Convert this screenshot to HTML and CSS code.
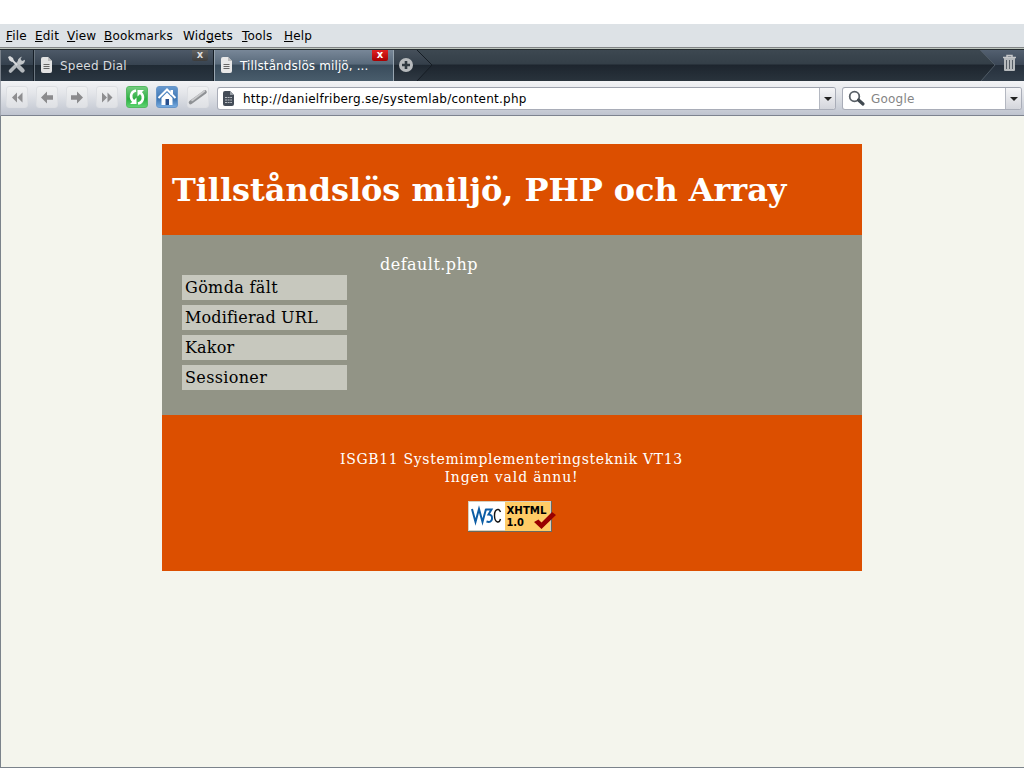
FILE: index.html
```html
<!DOCTYPE html>
<html lang="sv">
<head>
<meta charset="utf-8">
<title>Tillståndslös miljö, PHP och Array</title>
<link rel="stylesheet" href="styles.css">
</head>
<body>
<nav class="menubar">
  <span class="m-file"><u>F</u>ile</span><span class="m-edit"><u>E</u>dit</span><span class="m-view"><u>V</u>iew</span><span class="m-book"><u>B</u>ookmarks</span><span class="m-widg">Wid<u>g</u>ets</span><span class="m-tool"><u>T</u>ools</span><span class="m-help"><u>H</u>elp</span>
</nav>
<div class="tabbar">
  <div class="panel-toggle">
    <svg width="20" height="20" viewBox="0 0 20 20"><path d="M3.500 16L12 7.500" stroke="#b4b9bd" stroke-width="3.600" stroke-linecap="round"/><path d="M11 8.500Q9.500 3.500 15 1.500L13.500 4l1.500 2 3-1.200Q18 9.500 12.500 10z" fill="#c3c7ca"/><path d="M3 3l8 8" stroke="#d8dadc" stroke-width="1.800"/><path d="M1 2l2-1 3 2 .8 2.500L5 7 2.500 5.500z" fill="#d8dadc"/><path d="M11.500 11.500l4 4" stroke="#b4b9bd" stroke-width="4.400" stroke-linecap="round"/></svg>
  </div>
  <div class="tab">
    <svg class="doc" width="12" height="17" viewBox="0 0 12 17"><path d="M0 2q0-2 2-2h5l4 4v10q0 2-2 2H2q-2 0-2-2z" fill="#e2e2e2"/><path d="M7 0v4h4z" fill="#bbb"/><path d="M2.500 7.500h6M2.500 9.500h6M2.500 11.500h6" stroke="#666"/></svg>
    <span class="tab-name">Speed Dial</span><b class="close">x</b>
  </div>
  <div class="tab active">
    <svg class="doc" width="12" height="17" viewBox="0 0 12 17"><path d="M0 2q0-2 2-2h5l4 4v10q0 2-2 2H2q-2 0-2-2z" fill="#e8e8e8"/><path d="M7 0v4h4z" fill="#bbb"/><path d="M2.500 7.500h6M2.500 9.500h6M2.500 11.500h6" stroke="#666"/></svg>
    <span class="tab-name">Tillståndslös miljö, ...</span><b class="close">x</b>
  </div>
  <svg class="new-tab" width="42" height="31" viewBox="0 0 42 31"><defs><linearGradient id="g" x2="0" y2="1"><stop stop-color="#46505b"/><stop offset=".46" stop-color="#343f4a"/><stop offset=".5" stop-color="#1f2831"/><stop offset="1" stop-color="#303a44"/></linearGradient></defs><path d="M0 0h23l15 15-15 16H0z" fill="url(#g)"/><path d="M23 0l15 15-15 16" fill="none" stroke="#161d24"/><circle cx="12" cy="15" r="7" fill="#b7babd"/><path d="M8 15h8M12 11v8" stroke="#303941" stroke-width="2.600"/></svg>
  <svg class="trash" width="44" height="31" viewBox="0 0 44 31"><defs><linearGradient id="t" x2="0" y2="1"><stop stop-color="#536070"/><stop offset=".47" stop-color="#3c4857"/><stop offset=".5" stop-color="#26303c"/><stop offset="1" stop-color="#323e4a"/></linearGradient></defs><path d="M0 0h44v31H1l14-16z" fill="url(#t)"/><path d="M0 0l15 15L1 31" fill="none" stroke="#4f5a65"/><path d="M23 7.500h13M27 7V5.500h5V7" stroke="#c6c8ca" stroke-width="1.500" fill="none"/><path d="M24 8h11v12q0 1-1 1h-9q-1 0-1-1z" fill="#b6babd"/><path d="M26.500 10v9M29.500 10v9M32.500 10v9" stroke="#555d65"/></svg>
</div>
<div class="toolbar">
  <div class="buttons">
    <i class="btn"><svg width="22" height="22" viewBox="0 0 22 22"><path d="M11 6.500v10l-5-5zM16.500 6.500v10l-5-5z" fill="#8e8e90"/></svg></i>
    <i class="btn"><svg width="22" height="22" viewBox="0 0 22 22"><path d="M5 11.500l6-6v3.700h6v4.600h-6v3.700z" fill="#8b8b8d"/></svg></i>
    <i class="btn"><svg width="22" height="22" viewBox="0 0 22 22"><path d="M17 11.500l-6-6v3.700H5v4.600h6v3.700z" fill="#8b8b8d"/></svg></i>
    <i class="btn"><svg width="22" height="22" viewBox="0 0 22 22"><path d="M6 6.500v10l5-5zM11.500 6.500v10l5-5z" fill="#8e8e90"/></svg></i>
    <i class="btn green"><svg width="22" height="22" viewBox="0 0 22 22"><path d="M10 4.500C4.500 5.500 3.500 12 7.500 15.500M12 17.500c5.500-1 6.500-7.500 2.500-11" fill="none" stroke="#fff" stroke-width="2.600"/><path d="M4 18h6.500v-6.500zM18 4h-6.500v6.500z" fill="#fff"/></svg></i>
    <i class="btn blue"><svg width="22" height="22" viewBox="0 0 22 22"><path d="M14.500 4h2.500v5h-2.500zM5.500 12L11 6.500l5.500 5.500v7h-11z" fill="#fff"/><path d="M2.500 12L11 3.500l8.500 8.500" fill="none" stroke="#fff" stroke-width="2"/><path d="M5.500 11.500L11 6l5.500 5.500" fill="none" stroke="#5c8fc8" stroke-width=".8"/><path d="M9.500 13h3.500v6H9.500z" fill="#284f8c"/></svg></i>
    <i class="btn wand"><svg width="22" height="22" viewBox="0 0 22 22"><path d="M3.500 16.500L18 6" stroke="#8e9194" stroke-width="3.600" stroke-linecap="round"/><path d="M5 14.500L17.500 5" stroke="#cacbcd" stroke-width="1.600" stroke-linecap="round"/></svg></i>
  </div>
  <div class="field address">
    <svg width="12" height="16" viewBox="0 0 12 16"><path d="M0 2q0-2 2-2h5l4 4v9q0 2-2 2H2q-2 0-2-2z" fill="#454d58"/><path d="M7 0v4h4z" fill="#969ca3"/><path d="M2 6.500h7M2 9h7M2 11.500h7" stroke="#b8bcc2" stroke-dasharray="2 .6"/></svg>
    <span class="url">http://danielfriberg.se/systemlab/content.php</span><i class="drop"></i>
  </div>
  <div class="field search">
    <svg width="18" height="17" viewBox="0 0 18 17"><circle cx="6.500" cy="6.500" r="4.800" fill="#fff" stroke="#596067" stroke-width="1.800"/><path d="M10.500 10l4.500 4" stroke="#414950" stroke-width="3.200" stroke-linecap="round"/></svg>
    <span class="engine">Google</span><i class="drop"></i>
  </div>
</div>
<div class="viewport">
  <main class="page">
    <header class="banner"><h1>Tillståndslös miljö, PHP och Array</h1></header>
    <section class="content">
      <ul class="links"><li class="l1">Gömda fält</li><li class="l2">Modifierad URL</li><li class="l3">Kakor</li><li class="l4">Sessioner</li></ul>
      <p class="default">default.php</p>
    </section>
    <footer class="footer">
      <p><span class="course">ISGB11 Systemimplementeringsteknik VT13</span><br><span class="none">Ingen vald ännu!</span></p>
      <svg class="badge" width="90" height="32" viewBox="0 0 90 32"><path d="M0 0h84v31H0z" fill="#69695f"/><path d="M0 0h83v30H0z" fill="#d5d0c0"/><path d="M1 1h36v28H1z" fill="#fff"/><path d="M37 1h45v29H37z" fill="#fc6"/><g fill="none" stroke="#0c5da5" stroke-width="2"><path d="M4 8l3.500 13L11 8l3.500 13L18 8"/><path d="M17.500 8.500h6l-3 5q4 0 3.500 4.500-.8 4-5.500 2.500"/></g><path d="M32.500 11q-1-3-3-2.500-3 .5-3 6t3 6.500q2 .5 3-3" fill="none" stroke="#111" stroke-width="1.400"/><text x="38.500" y="13" textLength="40" lengthAdjust="spacingAndGlyphs">XHTML</text><text x="38.500" y="24.500" textLength="17.500" lengthAdjust="spacingAndGlyphs">1.0</text><path d="M66 21l4.500-2.500 3 3L84 11l4 3-14.500 14z" fill="#900"/></svg>
    </footer>
  </main>
</div>
</body>
</html>
```
FILE: styles.css
```css
* { box-sizing: border-box; }
body { margin: 0; padding-top: 24px; width: 1024px; height: 768px; overflow: hidden; background: #fff; font: 12px "DejaVu Sans", sans-serif; display: flex; flex-direction: column; }
.menubar { height: 23px; flex: none; background: #dde2e6; padding-left: 6px; display: flex; line-height: 25px; color: #000; letter-spacing: .2px; }
.menubar span { flex: none; white-space: nowrap; }
.menubar u { text-underline-offset: 1px; text-decoration-thickness: 1px; text-decoration-skip-ink: none; }
.m-file { width: 29px; }
.m-edit { width: 32px; }
.m-view { width: 37px; }
.m-book { width: 79px; }
.m-widg { width: 59px; }
.m-tool { width: 42px; }
.tabbar { height: 34px; flex: none; display: flex; border-top: 1px solid #818486; box-shadow: inset 0 1px #bdc5bd, inset 0 2px #252c31; padding-top: 2px; background: linear-gradient(#3e4952 0, #343f48 16px, #1d252e 17px, #29333c 100%); }
.panel-toggle { width: 34px; padding: 5px 0 0 6px; border-left: 1px solid #788089; border-right: 1px solid #161e27; background: linear-gradient(#485461, #36424f 47%, #232d37 48%, #303c48); }
.tab { position: relative; width: 180px; display: flex; align-items: center; padding-left: 6px; border-left: 1px solid #6b7680; border-right: 1px solid #151d25; background: linear-gradient(#4d5968, #384451 47%, #202a34 48%, #2a3641); color: #d7dade; }
.tab.active { border-left-color: #98a5b0; border-right-color: #98a5b0; background: linear-gradient(#788798, #596a7b 46%, #394b5b 48%, #495d6c); color: #fff; }
.tab-name { margin-left: 7px; letter-spacing: .22px; }
.active .tab-name { letter-spacing: .12px; }
.close { position: absolute; right: 5px; top: 0; width: 16px; height: 11px; background: linear-gradient(#626262, #3d3d3d); border-radius: 0 0 2px 2px; font: bold 10px/9px "DejaVu Sans", sans-serif; text-align: center; color: #ddd; }
.active .close { background: linear-gradient(#e12222, #a80000); color: #fff; }
.trash { margin-left: auto; }
.toolbar { height: 35px; flex: none; display: flex; background: linear-gradient(#f2f3f5, #e4e6ea 35%, #bfc4cf); border-bottom: 1px solid #7d838f; border-left: 1px solid #a3a8b1; padding-top: 6px; }
.buttons { width: 216px; display: flex; gap: 8px; padding-left: 5px; flex: none; }
.btn { width: 22px; height: 22px; border: 1px solid #dddfe3; border-radius: 3px; background: linear-gradient(#f0f1f2, #dfe1e5); flex: none; margin-top: -1px; }
.btn svg { display: block; margin: -1px; }
.btn.green { background: linear-gradient(#75cc80, #2daf43 60%, #5ed471); border-color: #54ba62; }
.btn.blue { background: linear-gradient(#6799cf, #3e75b1 60%, #76abe0); border-color: #6796c9; }
.wand { margin-left: 1px; }
.field { position: relative; height: 23px; background: #fff; border: 1px solid #a9adb8; border-top-color: #9da2ad; border-radius: 3px; display: flex; align-items: center; overflow: hidden; }
.address { width: 619px; padding-left: 5px; }
.url { margin-left: 8px; color: #000; letter-spacing: .235px; }
.search { margin-left: 6px; width: 180px; padding-left: 5px; }
.engine { margin-left: 5px; color: #858585; letter-spacing: .2px; }
.drop { margin-left: auto; width: 16px; height: 100%; border-left: 1px solid #b4b8c1; background: linear-gradient(#f5f5f7, #d4d6dc); display: flex; align-items: center; justify-content: center; }
.drop::after { content: ""; border: 4px solid transparent; border-top-color: #222; border-bottom: 0; margin-top: 1px; }
.viewport { flex: 1; background: #f4f5ed; border-left: 1px solid #7b838b; border-bottom: 1px solid #7b838b; padding: 28px 0 0 161px; font-family: "DejaVu Serif", serif; font-variant-ligatures: none; }
.page { width: 700px; }
.banner { height: 91px; background: #dc4f00; padding: 28px 0 0 10px; }
h1 { margin: 0; color: #fff; font: bold 32px/37px "DejaVu Serif", serif; letter-spacing: -.05px; white-space: nowrap; }
.content { height: 180px; background: #929486; display: flex; }
.links { list-style: none; margin: 40px 0 0 20px; padding: 0; width: 165px; display: flex; flex-direction: column; gap: 5px; }
.links li { background: #c7c8be; height: 25px; padding-left: 3px; font-size: 16px; line-height: 25px; color: #000; white-space: nowrap; }
.l1, .l4 { letter-spacing: .35px; }
.l2, .l3 { letter-spacing: .15px; }
.default { margin: 20px 0 0 33px; color: #fff; font-size: 16px; line-height: 19px; letter-spacing: .47px; }
.footer { height: 156px; background: #dc4f00; color: #fff; padding-top: 35px; text-align: center; }
.footer p { margin: 0 1px 15px 0; font-size: 14px; line-height: 18px; height: 36px; }
.course { letter-spacing: .66px; }
.none { letter-spacing: .85px; }
.badge { display: block; margin-left: 306px; }
.badge text { font: bold 10px "DejaVu Sans", sans-serif; fill: #000; }
```
